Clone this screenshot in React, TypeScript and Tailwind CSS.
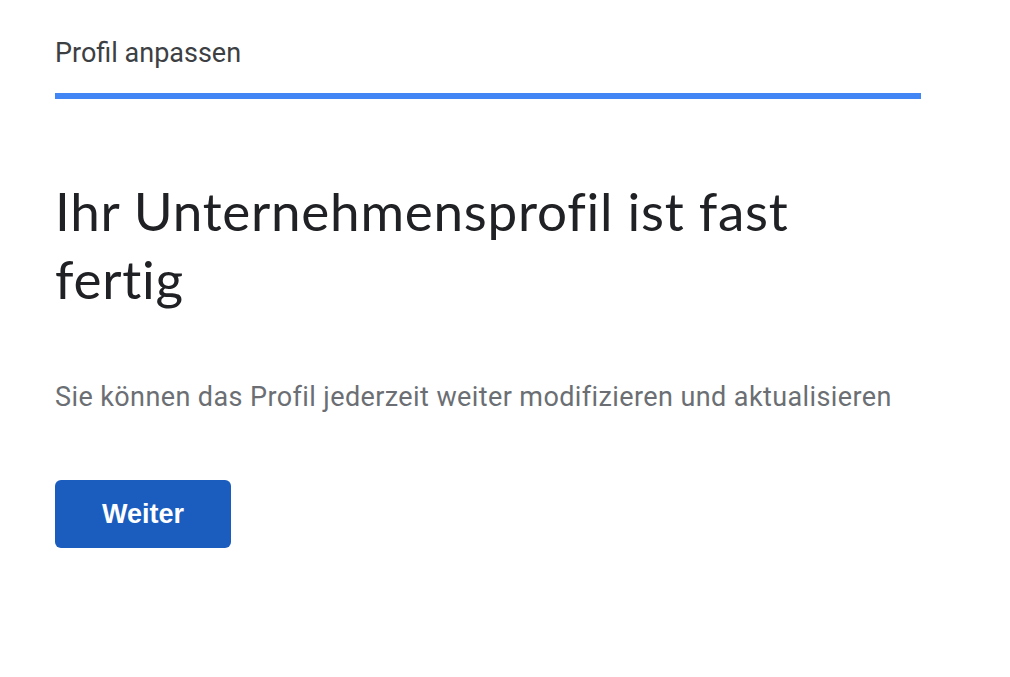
import React from "react";

export default function App() {
  return (
    <div className="w-[1010px] h-[677px] bg-white overflow-hidden" style={{ fontFamily: "Roboto, 'Liberation Sans', sans-serif" }}>
      <div className="pl-[55px] w-[921px]">
        <div className="pt-[35px] text-[27px] leading-[36px] text-[#3c4043]">Profil anpassen</div>
        <div className="mt-[22px] h-[6px] bg-[#4285f4]" />
        <h1 className="mt-[78px] text-[53px] leading-[68px] tracking-[0.75px] text-[#202124] w-[790px] [font-variant-ligatures:none]" style={{ fontFamily: "Lato, 'Noto Sans', sans-serif" }}>
          Ihr Unternehmensprofil ist fast fertig
        </h1>
        <p className="mt-[66px] text-[27px] leading-[36px] tracking-[0.4px] text-[#6b6f74]">
          Sie können das Profil jederzeit weiter modifizieren und aktualisieren
        </p>
        <button className="mt-[65px] w-[176px] h-[68px] rounded-[6px] bg-[#1a5dbe] text-white text-[27px] font-bold" style={{ fontFamily: "'Liberation Sans', Arial, sans-serif" }}>
          Weiter
        </button>
      </div>
    </div>
  );
}
